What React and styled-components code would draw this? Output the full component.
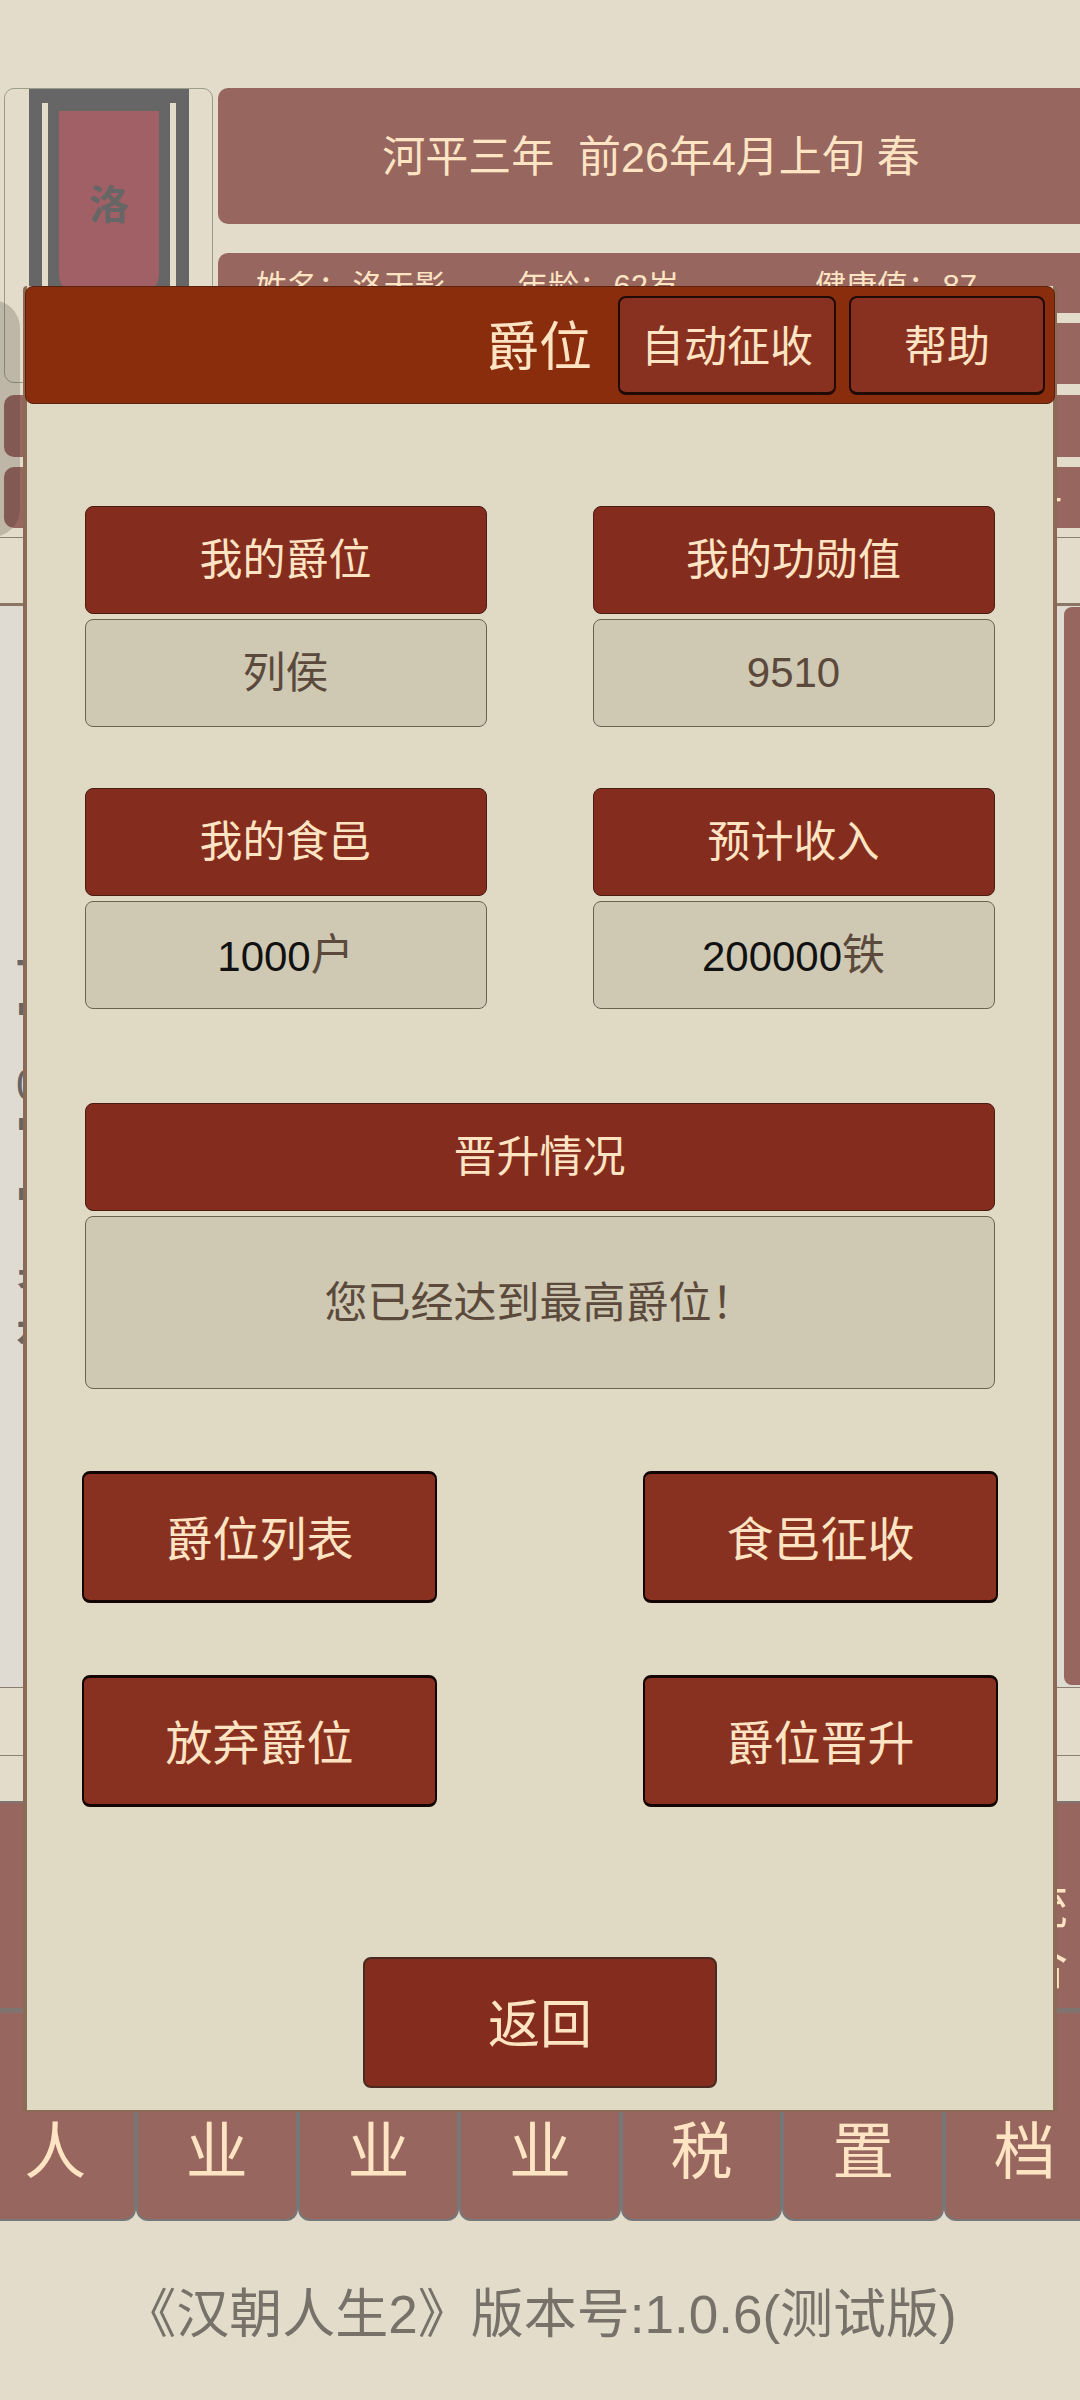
import React from "react";
import styled, { createGlobalStyle } from "styled-components";

const GlobalStyle = createGlobalStyle`
	html, body {
		margin: 0;
		padding: 0;
		background: #e3dcca;
	}
	* {
		box-sizing: border-box;
	}
`;

const Page = styled.div`
	position: relative;
	width: 1080px;
	height: 2400px;
	overflow: hidden;
	padding-top: 88px;
	background: #e3dcca;
	font-family: "Liberation Sans", "Noto Sans CJK SC", sans-serif;
	color: #ffe4c4;
`;

const TopRow = styled.div`
	display: flex;
	gap: 5px;
	padding-left: 4px;
`;

const AvatarCard = styled.div`
	width: 209px;
	height: 295px;
	padding: 0 24px;
	flex-shrink: 0;
	overflow: hidden;
	border: 1px solid #9c9c8a;
	border-radius: 10px;
`;

const AvatarFrame = styled.div`
	display: flex;
	justify-content: center;
	gap: 11px;
	width: 160px;
	height: 100%;
	padding-top: 14px;
	background: #666;
`;

const AvatarSlot = styled.div`
	width: 6px;
	background: #e3dcca;
`;

const AvatarPlate = styled.div`
	display: flex;
	align-items: center;
	justify-content: center;
	width: 100px;
	height: 182px;
	margin-top: 8px;
	border-radius: 0 0 18px 18px;
	background: #a06065;
	color: #666;
	font-size: 40px;
	font-weight: bold;
`;

const RightColumn = styled.div`
	flex: 1;
	display: flex;
	flex-direction: column;
`;

const YearBar = styled.div`
	display: flex;
	align-items: center;
	justify-content: center;
	height: 136px;
	margin-bottom: 29px;
	padding: 0 0 7px 4px;
	border-radius: 10px 0 0 10px;
	background: #96665f;
	font-size: 43px;
`;

const InfoBar = styled.div`
	display: grid;
	grid-template-columns: 261px 298px 1fr;
	align-items: center;
	height: 60px;
	margin-bottom: 10px;
	padding-left: 38px;
	border-radius: 10px 0 0 10px;
	background: #96665f;
	font-size: 31px;
	white-space: pre;
	word-spacing: -5px;
`;

const StatRow = styled.div`
	display: flex;
	align-items: center;
	justify-content: flex-end;
	height: ${(p) => p.$height || 61}px;
	margin: ${(p) => p.$margin || "0"};
	padding-right: 18px;
	border-radius: 10px 0 0 10px;
	background: #96665f;
	font-size: 40px;
`;

const Band = styled.div`
	height: ${(p) => p.$height}px;
	margin-top: ${(p) => p.$top || 0}px;
	border-top: 1px solid #8b7f70;
`;

const LogPanel = styled.div`
	display: flex;
	justify-content: space-between;
	height: 1084px;
	border-top: 3px solid #8b7565;
	background: #dfdbd2;
`;

const LogList = styled.div`
	display: flex;
	flex-direction: column;
	padding-left: 16px;
	color: #666;
`;

const LogLine = styled.div`
	height: ${(p) => p.$size}px;
	margin-top: ${(p) => p.$top}px;
	font-size: ${(p) => p.$size}px;
	font-weight: ${(p) => (p.$light ? "normal" : "bold")};
	line-height: 1;
`;

const ScrollPane = styled.div`
	width: 16px;
	margin: 1px 0 2px;
	border-radius: 8px 0 0 8px;
	background: #96665f;
`;

const SideTab = styled.div`
	display: flex;
	justify-content: flex-end;
	height: 212px;
	padding: 74px 12px 0 0;
	border-top: 2px solid #807570;
	border-bottom: 5px solid #7f7470;
	background: #96665f;
	font-size: 50px;
	line-height: 60px;
	text-align: center;
`;

const TabRow = styled.div`
	display: flex;
	width: 1131px;
	height: 208px;
	margin-left: -25.5px;
`;

const Tab = styled.div`
	flex: 1;
	display: flex;
	justify-content: center;
	padding-top: 100px;
	border: 2px solid #777;
	border-top: 0;
	border-radius: 0 0 12px 12px;
	background: #96665f;
	font-size: 62px;
	line-height: 80px;
`;

const Footer = styled.div`
	display: flex;
	justify-content: center;
	padding-top: 64px;
	color: #77716a;
	font-size: 53px;
	line-height: 60px;
	white-space: pre;
`;

const SideShade = styled.div`
	position: absolute;
	left: -40px;
	top: 300px;
	width: 60px;
	height: 237px;
	border-radius: 28px;
	background: rgba(60, 50, 40, 0.22);
`;

const Modal = styled.div`
	position: absolute;
	left: 23px;
	top: 286px;
	width: 1034px;
	height: 1826px;
	border: 4px solid #8b6b55;
	border-top: 0;
	border-bottom-width: 2px;
	border-radius: 4px;
	background: #e0dac5;
`;

const ModalHeader = styled.div`
	display: flex;
	align-items: center;
	justify-content: flex-end;
	gap: 13px;
	width: 1030px;
	height: 118px;
	margin-left: -2px;
	padding-right: 9px;
	border: 1px solid #5c2210;
	border-radius: 8px;
	background: #8a2d0d;
`;

const ModalTitle = styled.div`
	margin-right: 13px;
	padding-bottom: 4px;
	font-size: 53px;
`;

const HeaderButton = styled.div`
	display: flex;
	align-items: center;
	justify-content: center;
	width: ${(p) => p.$width}px;
	height: 99px;
	padding-bottom: 4px;
	border: 2px solid #1f0a05;
	border-bottom-width: 3px;
	border-radius: 8px;
	background: #883121;
	font-size: 43px;
`;

const ModalBody = styled.div`
	display: flex;
	flex-direction: column;
	padding: 102px 55px 0;
`;

const FieldGrid = styled.div`
	display: grid;
	grid-template-columns: 402px 402px;
	column-gap: 106px;
	row-gap: 61px;
	padding: 0 2.5px;
	margin-bottom: ${(p) => p.$after}px;
`;

const Field = styled.div`
	display: flex;
	flex-direction: column;
	gap: 5px;
	grid-column: ${(p) => (p.$wide ? "1 / -1" : "auto")};
`;

const FieldLabel = styled.div`
	display: flex;
	align-items: center;
	justify-content: center;
	height: 108px;
	padding-bottom: 9px;
	border: 1px solid #4a1c12;
	border-radius: 8px;
	background: #842d1f;
	font-size: 43px;
`;

const FieldValue = styled.div`
	display: flex;
	align-items: center;
	justify-content: center;
	height: ${(p) => p.$height || 108}px;
	border: 1px solid #6b6350;
	border-radius: 8px;
	background: #cfc9b4;
	color: #5b4a3c;
	font-size: 42px;
	white-space: pre;
`;

const Mixed = styled.span`
	display: block;
	margin-top: -7px;
`;

const Figure = styled.span`
	color: #111;
`;

const Unit = styled.span`
	display: inline-block;
	font-size: 43px;
	transform: translateY(${(p) => p.$lift || -4}px);
`;

const ActionGrid = styled.div`
	display: grid;
	grid-template-columns: 355px 355px;
	justify-content: space-between;
	row-gap: 72px;
`;

const ActionButton = styled.div`
	display: flex;
	align-items: center;
	justify-content: center;
	height: 132px;
	padding-bottom: 4px;
	border: 2px solid #140503;
	border-top-width: 3px;
	border-bottom-width: 3px;
	border-radius: 8px;
	background: #883121;
	font-size: 47px;
`;

const BackButton = styled.div`
	display: flex;
	align-items: center;
	justify-content: center;
	align-self: center;
	width: 354px;
	height: 131px;
	margin-top: 150px;
	padding-bottom: 4px;
	border: 2px solid #4a2a20;
	border-radius: 8px;
	background: #842d1f;
	font-size: 52px;
`;

const TABS = ["人", "业", "业", "业", "税", "置", "档"];
const ACTIONS = ["爵位列表", "食邑征收", "放弃爵位", "爵位晋升"];

const App = () => {
	return (
		<Page>
			<GlobalStyle />
			<TopRow>
				<AvatarCard>
					<AvatarFrame>
						<AvatarSlot />
						<AvatarPlate>洛</AvatarPlate>
						<AvatarSlot />
					</AvatarFrame>
				</AvatarCard>
				<RightColumn>
					<YearBar>河平三年&nbsp;&nbsp;前26年4月上旬 春</YearBar>
					<InfoBar>
						<span>姓名： 洛天影</span>
						<span>年龄： 62岁</span>
						<span>健康值： 87</span>
					</InfoBar>
					<StatRow />
				</RightColumn>
			</TopRow>
			<StatRow $height={62} $margin="11px 0 0 4px" />
			<StatRow $margin="10px 0 0 4px">一</StatRow>
			<Band $height={66} $top={9} />
			<LogPanel>
				<LogList>
					<LogLine $size={40} $top={338}>一</LogLine>
					<LogLine $size={40} $top={8}>冖</LogLine>
					<LogLine $size={44} $top={31} $light>0</LogLine>
					<LogLine $size={40} $top={0}>冖</LogLine>
					<LogLine $size={40} $top={30}>冖</LogLine>
					<LogLine $size={46} $top={27}>身</LogLine>
					<LogLine $size={46} $top={13}>永</LogLine>
				</LogList>
				<ScrollPane />
			</LogPanel>
			<Band $height={68} />
			<Band $height={46} />
			<SideTab>
				<div>
					统
					<br />合
				</div>
			</SideTab>
			<TabRow>
				{TABS.map((name, i) => (
					<Tab key={i}>{name}</Tab>
				))}
			</TabRow>
			<Footer>《汉朝人生2》版本号:1.0.6(测试版)</Footer>

			<SideShade />
			<Modal>
				<ModalHeader>
					<ModalTitle>爵位</ModalTitle>
					<HeaderButton $width={218}>自动征收</HeaderButton>
					<HeaderButton $width={196}>帮助</HeaderButton>
				</ModalHeader>
				<ModalBody>
					<FieldGrid $after={94}>
						<Field>
							<FieldLabel>我的爵位</FieldLabel>
							<FieldValue><Unit>列侯</Unit></FieldValue>
						</Field>
						<Field>
							<FieldLabel>我的功勋值</FieldLabel>
							<FieldValue>9510</FieldValue>
						</Field>
						<Field>
							<FieldLabel>我的食邑</FieldLabel>
							<FieldValue>
								<Mixed><Figure>1000</Figure><Unit $lift={-1}>户</Unit></Mixed>
							</FieldValue>
						</Field>
						<Field>
							<FieldLabel>预计收入</FieldLabel>
							<FieldValue>
								<Mixed><Figure>200000</Figure><Unit $lift={-1}>铁</Unit></Mixed>
							</FieldValue>
						</Field>
					</FieldGrid>
					<FieldGrid $after={82}>
						<Field $wide>
							<FieldLabel>晋升情况</FieldLabel>
							<FieldValue $height={173}><Unit>您已经达到最高爵位！</Unit></FieldValue>
						</Field>
					</FieldGrid>
					<ActionGrid>
						{ACTIONS.map((name) => (
							<ActionButton key={name}>{name}</ActionButton>
						))}
					</ActionGrid>
					<BackButton>返回</BackButton>
				</ModalBody>
			</Modal>
		</Page>
	);
};

export default App;
